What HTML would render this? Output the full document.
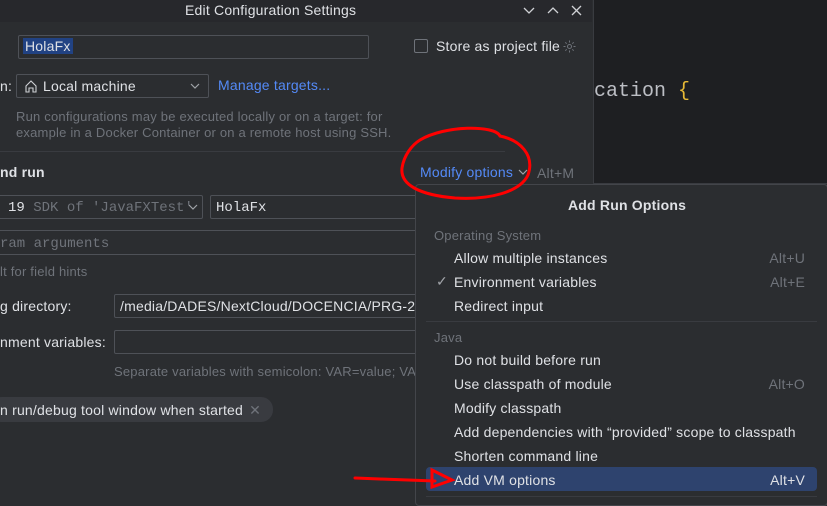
<!DOCTYPE html>
<html><head><style>
*{margin:0;padding:0;box-sizing:border-box}
body{width:827px;height:505px;overflow:hidden;background:#2b2d30;font-family:"Liberation Sans",sans-serif;font-size:14px;letter-spacing:0.2px;color:#dfe1e5;position:relative}
.a{position:absolute;white-space:nowrap}
.mono{font-family:"Liberation Mono",monospace;letter-spacing:0}
.field{position:absolute;border:1px solid #4e5157;background:#2b2d30;border-radius:2px}
.dim{color:#6f737a}
.link{color:#548af7}
.mi{position:absolute;left:454px;color:#dfe1e5}
.sc{position:absolute;right:22px;color:#6f737a}
</style></head><body>
<div class="a" style="left:593px;top:0;width:234px;height:183px;background:#1e1f22;border-left:1px solid #393b40"></div>
<div class="a mono" style="left:594px;top:80px;font-size:20px;color:#bcbec4">cation <span style="color:#e8ba36">{</span></div>
<div class="a" style="left:593px;top:183px;width:234px;height:1px;background:#393b40"></div>
<div class="a" style="left:0;top:0;width:592px;height:22px;background:#27282c"></div>
<div class="a" style="left:185px;top:2px;font-size:14px">Edit Configuration Settings</div>
<svg class="a" style="left:520px;top:3px" width="70" height="16" viewBox="0 0 70 16" fill="none" stroke="#cfd1d5" stroke-width="1.3"><path d="M4 5l5 5 5-5"/><path d="M28 10l5-5 5 5"/><path d="M52 3l9 9M61 3l-9 9"/></svg>
<div class="field" style="left:18px;top:35px;width:351px;height:24px"></div>
<div class="a" style="left:23px;top:38px;background:#214283;padding:0 2px">HolaFx</div>
<div class="a" style="left:414px;top:39px;width:14px;height:14px;border:1px solid #6f737a;border-radius:2px"></div>
<div class="a" style="left:436px;top:38px">Store as project file</div>
<svg class="a" style="left:562px;top:39px" width="15" height="15" viewBox="0 0 15 15" fill="none" stroke="#6f737a" stroke-width="1"><circle cx="7.5" cy="7.5" r="2"/><path d="M7.5 1.5v2M7.5 11.5v2M1.5 7.5h2M11.5 7.5h2M3.3 3.3l1.4 1.4M10.3 10.3l1.4 1.4M3.3 11.7l1.4-1.4M10.3 4.7l1.4-1.4"/></svg>
<div class="a" style="left:0;top:78px">n:</div>
<div class="field" style="left:16px;top:74px;width:193px;height:24px"></div>
<svg class="a" style="left:24px;top:79px" width="14" height="14" viewBox="0 0 14 14" fill="none" stroke="#cfd1d5" stroke-width="1.1"><path d="M2 7l5-5 5 5v6H9V9H5v4H2z"/></svg>
<div class="a" style="left:43px;top:78px">Local machine</div>
<svg class="a" style="left:190px;top:82px" width="10" height="8" viewBox="0 0 10 8" fill="none" stroke="#a0a3a8" stroke-width="1.2"><path d="M1 2l4 4 4-4"/></svg>
<div class="a link" style="left:218px;top:77px">Manage targets...</div>
<div class="a dim" style="left:16px;top:109px;line-height:16px;font-size:13px">Run configurations may be executed locally or on a target: for<br>example in a Docker Container or on a remote host using SSH.</div>
<div class="a" style="left:0;top:151px;width:505px;height:1px;background:#393b40"></div>
<div class="a" style="left:0;top:164px;font-weight:bold">nd run</div>
<div class="a link" style="left:420px;top:164px">Modify options</div>
<svg class="a" style="left:518px;top:168px" width="10" height="8" viewBox="0 0 10 8" fill="none" stroke="#a0a3a8" stroke-width="1.2"><path d="M1 2l4 4 4-4"/></svg>
<div class="a dim" style="left:537px;top:165px">Alt+M</div>
<div class="field" style="left:-2px;top:195px;width:205px;height:24px"></div>
<div class="a mono" style="left:8px;top:200px;font-size:14px"><span>19</span> <span class="dim">SDK of 'JavaFXTest'</span></div>
<svg class="a" style="left:188px;top:203px" width="10" height="8" viewBox="0 0 10 8" fill="none" stroke="#a0a3a8" stroke-width="1.2"><path d="M1 2l4 4 4-4"/></svg>
<div class="field" style="left:210px;top:195px;width:220px;height:24px"></div>
<div class="a mono" style="left:216px;top:200px;font-size:14px">HolaFx</div>
<div class="field" style="left:-2px;top:230px;width:430px;height:25px"></div>
<div class="a mono dim" style="left:0;top:236px;font-size:14px">ram arguments</div>
<div class="a dim" style="left:0;top:264px;font-size:13px">lt for field hints</div>
<div class="a" style="left:0;top:298px">g directory:</div>
<div class="field" style="left:114px;top:294px;width:320px;height:24px"></div>
<div class="a" style="left:120px;top:298px">/media/DADES/NextCloud/DOCENCIA/PRG-232</div>
<div class="a" style="left:0;top:334px">nment variables:</div>
<div class="field" style="left:114px;top:330px;width:320px;height:24px"></div>
<div class="a dim" style="left:114px;top:364px;font-size:13px">Separate variables with semicolon: VAR=value; VAR1=</div>
<div class="a" style="left:-10px;top:397px;width:283px;height:25px;background:#393b40;border-radius:12px"></div>
<div class="a" style="left:0;top:402px">n run/debug tool window when started <span class="dim" style="margin-left:2px">✕</span></div>
<div class="a" style="left:415px;top:184px;width:413px;height:322px;background:#2b2d30;border:1px solid #43454a;border-radius:4px"></div>
<div class="a" style="left:568px;top:197px;font-weight:bold">Add Run Options</div>
<div class="a dim" style="left:434px;top:228px;font-size:13px">Operating System</div>
<div class="mi" style="top:250px">Allow multiple instances</div><div class="sc" style="top:250px">Alt+U</div>
<div class="a" style="left:436px;top:273px;color:#a0a3a8">✓</div>
<div class="mi" style="top:274px">Environment variables</div><div class="sc" style="top:274px">Alt+E</div>
<div class="mi" style="top:298px">Redirect input</div>
<div class="a" style="left:426px;top:321px;width:391px;height:1px;background:#393b40"></div>
<div class="a dim" style="left:434px;top:330px;font-size:13px">Java</div>
<div class="mi" style="top:352px">Do not build before run</div>
<div class="mi" style="top:376px">Use classpath of module</div><div class="sc" style="top:376px">Alt+O</div>
<div class="mi" style="top:400px">Modify classpath</div>
<div class="mi" style="top:424px">Add dependencies with “provided” scope to classpath</div>
<div class="mi" style="top:448px">Shorten command line</div>
<div class="a" style="left:426px;top:467px;width:391px;height:24px;background:#2e436e;border-radius:4px"></div>
<div class="mi" style="top:472px">Add VM options</div><div class="sc" style="top:472px;color:#dfe1e5">Alt+V</div>
<div class="a" style="left:426px;top:496px;width:391px;height:1px;background:#393b40"></div>
<svg class="a" style="left:0;top:0" width="827" height="505" viewBox="0 0 827 505" fill="none" stroke="#f00" stroke-width="3" stroke-linecap="round"><path d="M420 140C445 125 495 125 500 136C520 140 535 155 528 175C520 192 490 200 455 198C420 195 400 185 402 168C404 155 412 145 420 140Z"/><path d="M355 478L380 479L435 481M432 470L452 480L432 487Z"/></svg>
</body></html>
